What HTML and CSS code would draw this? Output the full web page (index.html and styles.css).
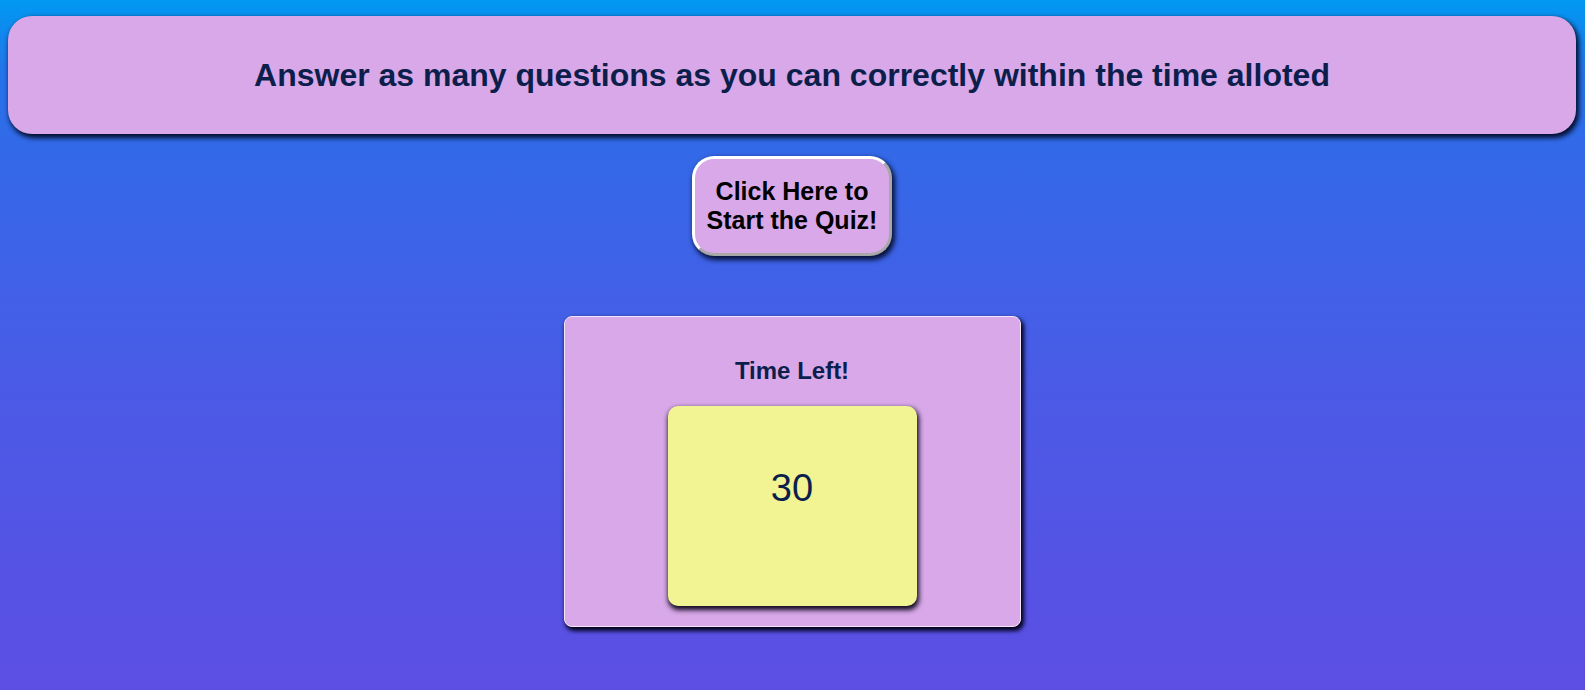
FILE: index.html
```html
<!DOCTYPE html>
<html lang="en">
<head>
<meta charset="utf-8">
<title>Quiz</title>
<link rel="stylesheet" href="styles.css">
</head>
<body>
<header class="banner">
  <h1 class="banner-title">Answer as many questions as you can correctly within the time alloted</h1>
</header>
<main class="main">
  <button class="start-btn" type="button">Click Here to<br>Start the Quiz!</button>
  <section class="timer-card">
    <h2 class="timer-label">Time Left!</h2>
    <div class="timer-box"><span class="timer-value">30</span></div>
  </section>
</main>
</body>
</html>
```

FILE: styles.css
```css
html, body {
  margin: 0;
  height: 100%;
}
body {
  font-family: "Liberation Sans", Arial, sans-serif;
  background: linear-gradient(to bottom, #0099f2 0px, #2474ea 70px, #3369e8 150px, #4a5be6 380px, #5c4ee3 690px);
  padding: 16px 9px 0 8px;
  box-sizing: border-box;
  overflow: hidden;
}
.banner {
  height: 118px;
  background: #d8a8e8;
  border-radius: 24px;
  box-shadow: 2px 3px 5px 1px rgba(0, 8, 35, 0.95);
  display: flex;
  align-items: center;
  justify-content: center;
}
.banner-title {
  margin: 0;
  font-size: 32px;
  font-weight: bold;
  color: #0c1f4c;
  line-height: 36px;
}
.main {
  display: flex;
  flex-direction: column;
  align-items: center;
}
.start-btn {
  margin-top: 22px;
  width: 200px;
  height: 100px;
  background: #d8a8e8;
  border: 3px solid;
  border-color: #ffffff #a8a8a8 #a8a8a8 #ffffff;
  border-radius: 22px;
  font-family: "Liberation Sans", Arial, sans-serif;
  font-size: 25px;
  font-weight: bold;
  color: #000;
  line-height: 29px;
  padding: 0;
  box-shadow: 2px 3px 5px 1px rgba(0, 8, 35, 0.9);
}
.timer-card {
  margin-top: 60px;
  width: 457px;
  height: 311px;
  box-sizing: border-box;
  background: #d8a8e8;
  border: 1px solid #f4e6f8;
  border-radius: 8px;
  box-shadow: 2px 3px 4px 1px #02021a;
  display: flex;
  flex-direction: column;
  align-items: center;
  padding-top: 40px;
}
.timer-label {
  margin: 0;
  font-size: 24px;
  font-weight: bold;
  color: #0c1f4c;
  line-height: 28px;
}
.timer-box {
  margin-top: 21px;
  width: 249px;
  height: 200px;
  box-sizing: border-box;
  background: #f2f392;
  border-radius: 10px;
  box-shadow: 1px 3px 5px 1px rgba(5, 0, 20, 0.95);
  display: flex;
  justify-content: center;
  padding-top: 61px;
}
.timer-value {
  font-size: 38px;
  color: #0c1f4c;
  line-height: 42px;
}
```
